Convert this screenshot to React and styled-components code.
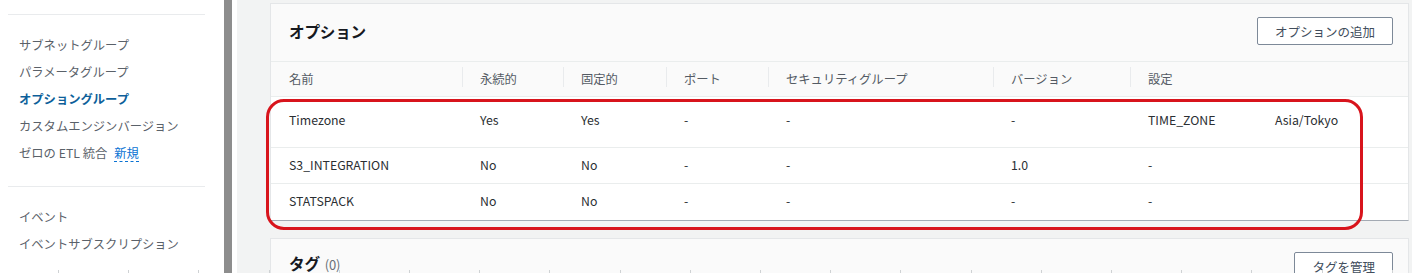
import React from 'react';
import styled, { createGlobalStyle } from 'styled-components';

const GlobalStyle = createGlobalStyle`
  *, *::before, *::after {
    box-sizing: border-box;
  }
  html, body {
    margin: 0;
    padding: 0;
    background: #ffffff;
    overflow: hidden;
  }
  body {
    font-family: "Noto Sans CJK JP", "Noto Sans", sans-serif;
    -webkit-font-smoothing: antialiased;
  }
`

const Page = styled.div`
  position: relative;
  display: flex;
  width: 1412px;
  height: 273px;
  overflow: hidden;
`

const Sidebar = styled.nav`
  width: 224px;
  flex-shrink: 0;
  background: #ffffff;
  padding: 14px 19px 0 8px;
`

const Divider = styled.div`
  height: 1px;
  background: #e9ebed;
`

const NavList = styled.ul`
  list-style: none;
  margin: 0;
  padding: 17px 0 19px 11px;
`

const NavItem = styled.li`
  height: 27px;
  line-height: 27px;
  font-size: 12.3px;
  white-space: nowrap;
  color: ${p => (p.$active ? '#0d5f9a' : '#5a6169')};
  font-weight: ${p => (p.$active ? 700 : 400)};
`

const NewBadge = styled.span`
  margin-left: 7px;
  color: #0972d3;
  border-bottom: 1px dashed #0972d3;
  line-height: 16px;
  display: inline-block;
`

const ScrollBar = styled.div`
  width: 13px;
  flex-shrink: 0;
  background: #8d8d8d;
  border-right: 5px solid #ffffff;
`

const Main = styled.main`
  flex: 1;
  background: #f2f3f3;
  padding: 3px 3px 0 33px;
  display: flex;
  flex-direction: column;
  gap: 17px;
`

const Card = styled.section`
  position: relative;
  background: #ffffff;
  border: 1px solid #e4e6e8;
  border-bottom-color: ${p => (p.$closed ? '#a3aab3' : '#e4e6e8')};
  flex-shrink: 0;
`

const CardHeader = styled.header`
  display: flex;
  align-items: ${p => (p.$top ? 'flex-start' : 'center')};
  justify-content: space-between;
  height: ${p => p.$height}px;
  padding: ${p => p.$pad};
  background: #fafafa;
  border-bottom: ${p => (p.$line ? '1px solid #eaeded' : 'none')};
`

const Title = styled.h2`
  margin: 0;
  font-size: 15.6px;
  line-height: 22px;
  font-weight: 700;
  color: #16191f;
  letter-spacing: -0.2px;
  white-space: nowrap;
`

const Count = styled.span`
  font-weight: 400;
  color: #687078;
  font-size: 13px;
  margin-left: 5px;
`

const Button = styled.button`
  font-family: inherit;
  font-size: 12.5px;
  color: #414d5c;
  background: #ffffff;
  border: 1px solid #7d8998;
  border-radius: 2px;
  height: 28px;
  padding: 0 ${p => p.$padX}px;
  cursor: pointer;
  white-space: nowrap;
`

const cols = '191px 101px 103px 102px 225px 137px 1fr'

const HeadRow = styled.div`
  display: grid;
  grid-template-columns: ${cols};
  height: 35px;
  align-items: center;
  background: #fafafa;
  border-bottom: 1px solid #eaeded;
`

const HeadCell = styled.div`
  position: relative;
  padding-left: 18px;
  font-size: 12.3px;
  color: #545b64;
  white-space: nowrap;
  ${p => p.$sep && `
    &::before {
      content: '';
      position: absolute;
      left: 0;
      top: -3px;
      height: 20px;
      width: 1px;
      background: #e9ebed;
    }
  `}
`

const Row = styled.div`
  display: grid;
  grid-template-columns: ${cols};
  height: ${p => p.$height}px;
  padding-bottom: ${p => p.$lift}px;
  align-items: center;
  background: #ffffff;
  border-bottom: ${p => (p.$last ? 'none' : '1px solid #eaeded')};
`

const Cell = styled.div`
  padding-left: 18px;
  font-size: 12.3px;
  color: #2b2f33;
  white-space: nowrap;
`

const SettingPair = styled.div`
  display: grid;
  grid-template-columns: 127px 1fr;
`

const Highlight = styled.div`
  position: absolute;
  left: -5px;
  top: 95px;
  width: 1097px;
  height: 131px;
  border: 3px solid #d8141c;
  border-radius: 18px;
  pointer-events: none;
`

const Ticks = styled.div`
  position: absolute;
  left: 0;
  right: 0;
  bottom: 0;
  height: 3px;
  background: repeating-linear-gradient(90deg, transparent 0 58px, #cfd2d4 58px 59px, transparent 59px 70.2px);
  pointer-events: none;
`

const headers = ['名前', '永続的', '固定的', 'ポート', 'セキュリティグループ', 'バージョン', '設定']

const options = [
  { name: 'Timezone', persistent: 'Yes', permanent: 'Yes', port: '-', sg: '-', version: '-', setting: ['TIME_ZONE', 'Asia/Tokyo'], height: 51, lift: 4 },
  { name: 'S3_INTEGRATION', persistent: 'No', permanent: 'No', port: '-', sg: '-', version: '1.0', setting: ['-'], height: 36, lift: 2 },
  { name: 'STATSPACK', persistent: 'No', permanent: 'No', port: '-', sg: '-', version: '-', setting: ['-'], height: 36, lift: 2 },
]

const App = () => {
  return (
    <>
      <GlobalStyle />
      <Page>
        <Sidebar>
          <Divider />
          <NavList>
            <NavItem>サブネットグループ</NavItem>
            <NavItem>パラメータグループ</NavItem>
            <NavItem $active>オプショングループ</NavItem>
            <NavItem>カスタムエンジンバージョン</NavItem>
            <NavItem>
              ゼロの ETL 統合<NewBadge>新規</NewBadge>
            </NavItem>
          </NavList>
          <Divider />
          <NavList>
            <NavItem>イベント</NavItem>
            <NavItem>イベントサブスクリプション</NavItem>
          </NavList>
        </Sidebar>
        <ScrollBar />
        <Main>
          <Card $closed>
            <CardHeader $height={58} $pad="0 15px 3px 18px" $line>
              <Title>オプション</Title>
              <Button $padX={17}>オプションの追加</Button>
            </CardHeader>
            <HeadRow>
              {headers.map((h, i) => (
                <HeadCell key={h} $sep={i > 0}>{h}</HeadCell>
              ))}
            </HeadRow>
            {options.map((o, i) => (
              <Row key={o.name} $height={o.height} $lift={o.lift} $last={i === options.length - 1}>
                <Cell>{o.name}</Cell>
                <Cell>{o.persistent}</Cell>
                <Cell>{o.permanent}</Cell>
                <Cell>{o.port}</Cell>
                <Cell>{o.sg}</Cell>
                <Cell>{o.version}</Cell>
                <Cell>
                  <SettingPair>
                    {o.setting.map(s => <span key={s}>{s}</span>)}
                  </SettingPair>
                </Cell>
              </Row>
            ))}
            <Highlight />
          </Card>
          <Card>
            <CardHeader $height={60} $pad="13px 15px 0 18px" $top>
              <Title>
                タグ<Count>(0)</Count>
              </Title>
              <Button $padX={17}>タグを管理</Button>
            </CardHeader>
          </Card>
        </Main>
        <Ticks />
      </Page>
    </>
  );
}

export default App;
